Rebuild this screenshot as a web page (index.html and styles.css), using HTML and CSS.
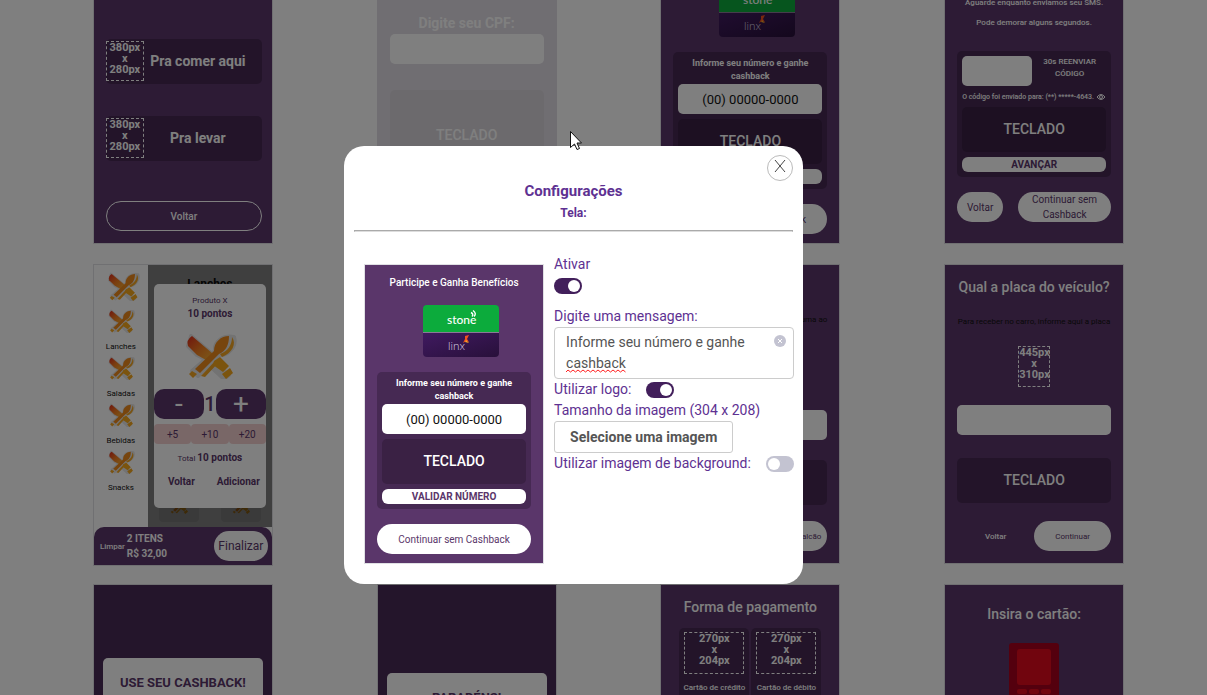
FILE: index.html
```html
<!DOCTYPE html>
<html lang="pt-BR">
<head>
<meta charset="utf-8">
<title>Configurações de telas</title>
<link rel="stylesheet" href="styles.css">
</head>
<body>
<svg class="defs" aria-hidden="true">
  <defs>
    <linearGradient id="knife" x1="0" y1="0" x2="1" y2="1">
      <stop offset="0" stop-color="#e02a1c"/><stop offset=".5" stop-color="#f47c20"/><stop offset="1" stop-color="#f9b233"/>
    </linearGradient>
    <linearGradient id="linxbg" x1="0" y1="0" x2="1" y2="1">
      <stop offset="0" stop-color="#401a60"/><stop offset="1" stop-color="#28103a"/>
    </linearGradient>
    <symbol id="cutlery" viewBox="0 0 54 46">
      <g stroke="#e6e6e6" stroke-width="4" stroke-linejoin="round" fill="#e6e6e6">
        <path d="M8 3 29 21 24 27 14 22 5 13Z"/><path d="M32 18C31 8 41 2 51 4 54 13 45 23 36 22L15 43 9 38Z"/><path d="M30 28 46 42 41 46 27 33Z"/>
      </g>
      <path fill="url(#knife)" d="M9 3 29 20Q29 27 23 27L14 22 5 13Q3 7 9 3Z"/>
      <path fill="#ef8a1c" d="M31 18C31 9 38 3 46 3 46 12 43 18 36 21L17 40 12 36Z"/>
      <path fill="#f5a623" d="M49 4C54 11 49 20 39 24L37 21C45 18 49 12 49 4ZM18 43 33 27 36 29 22 44ZM9 38 14 41 10 45 6 41Z"/>
      <path fill="#f7a81d" d="M31 28 37 24 46 33 40 39 30 32ZM39 41 47 35 50 40 43 46Z"/>
    </symbol>
    <symbol id="brand" viewBox="0 0 76 52">
      <path fill="#0cab3c" d="M0 27V4a4 4 0 0 1 4-4H72a4 4 0 0 1 4 4V27Z"/>
      <path fill="url(#linxbg)" d="M0 28H76V48a4 4 0 0 1-4 4H4a4 4 0 0 1-4-4Z"/>
      <path stroke="#8a7a96" d="M0 27.5H76"/>
      <text class="brand-stone" x="24" y="19">stone</text>
      <path fill="none" stroke="#fff" stroke-width="1.400" d="M48 7.500q3 1.500 1 4M50 5.500q4 3 1 6"/>
      <text class="brand-linx" x="25" y="45">linx</text>
      <path fill="#f4511e" d="M42 31 46 30 44 34 46 37 43 36 40 38 42 34Z"/><path fill="#f9a825" d="M43 35 46 38 42 37Z"/>
    </symbol>
  </defs>
</svg>

<main class="board">
  <section class="card card-where">
    <button class="option"><span class="slot">380px<br>x<br>280px</span><span class="option-name">Pra comer aqui</span></button>
    <button class="option"><span class="slot">380px<br>x<br>280px</span><span class="option-name">Pra levar</span></button>
    <button class="pill-outline">Voltar</button>
  </section>

  <section class="card card-cpf">
    <label class="heading" for="cpf">Digite seu CPF:</label>
    <input class="field" id="cpf" type="text">
    <div class="keyboard keyboard-tall">TECLADO</div>
  </section>

  <section class="card card-phone">
    <h3 class="invite">Participe e Ganha Benefícios</h3>
    <svg class="brand" role="img" aria-label="stone linx"><use href="#brand"/></svg>
    <div class="panel">
      <label class="panel-label" for="phone1">Informe seu número e ganhe cashback</label>
      <input class="field" id="phone1" type="text" value="(00) 00000-0000">
      <div class="keyboard">TECLADO</div>
      <button class="thin-button">VALIDAR NÚMERO</button>
    </div>
    <button class="pill">Continuar sem Cashback</button>
  </section>

  <section class="card card-sms">
    <p class="notice">Aguarde enquanto enviamos seu SMS.</p>
    <p class="notice">Pode demorar alguns segundos.</p>
    <div class="panel">
      <div class="code-row">
        <input class="field" type="text" aria-label="Código">
        <span class="resend">30s REENVIAR CÓDIGO</span>
      </div>
      <p class="sent">O código foi enviado para: (**) *****-4643.
        <svg class="eye" viewBox="0 0 10 8"><path d="M1 4Q5-1 9 4 5 9 1 4Z"/><circle cx="5" cy="4" r="1.500"/></svg></p>
      <div class="keyboard">TECLADO</div>
      <button class="thin-button">AVANÇAR</button>
    </div>
    <div class="actions">
      <button class="pill">Voltar</button>
      <button class="pill pill-wide">Continuar sem Cashback</button>
    </div>
  </section>

  <section class="card card-menu">
    <div class="menu-body">
      <nav class="categories">
        <svg class="cat-main"><use href="#cutlery"/></svg>
        <a href="#lanches"><svg><use href="#cutlery"/></svg>Lanches</a>
        <a href="#saladas"><svg><use href="#cutlery"/></svg>Saladas</a>
        <a href="#bebidas"><svg><use href="#cutlery"/></svg>Bebidas</a>
        <a href="#snacks"><svg><use href="#cutlery"/></svg>Snacks</a>
      </nav>
      <div class="products">
        <h3 class="products-title">Lanches</h3>
        <div class="product-row">
          <div class="product"><svg><use href="#cutlery"/></svg></div>
          <div class="product"><svg><use href="#cutlery"/></svg></div>
        </div>
        <div class="product-shade">
          <div class="product-box">
            <p class="small">Produto X</p>
            <p class="points">10 pontos</p>
            <svg class="product-pic"><use href="#cutlery"/></svg>
            <div class="counter"><button>-</button><span>1</span><button>+</button></div>
            <div class="steps"><button>+5</button><button>+10</button><button>+20</button></div>
            <p class="small total">Total <b>10 pontos</b></p>
            <div class="product-actions"><button>Voltar</button><button>Adicionar</button></div>
          </div>
        </div>
      </div>
    </div>
    <footer class="cart">
      <button class="clear">Limpar</button>
      <p class="cart-sum">2 ITENS<br>R$ 32,00</p>
      <button class="finish">Finalizar</button>
    </footer>
  </section>

  <section class="card"></section>

  <section class="card card-counter">
    <p class="hint">Retire no balcão, informe uma ao</p>
    <input class="field" type="text" aria-label="Nome">
    <div class="keyboard">TECLADO</div>
    <button class="pill">Retirar no balcão</button>
  </section>

  <section class="card card-plate">
    <h3 class="heading">Qual a placa do veículo?</h3>
    <label class="hint" for="plate">Para receber no carro, informe aqui a placa</label>
    <span class="slot">445px<br>x<br>310px</span>
    <input class="field" id="plate" type="text">
    <div class="keyboard">TECLADO</div>
    <div class="actions">
      <button class="ghost">Voltar</button>
      <button class="pill">Continuar</button>
    </div>
  </section>

  <section class="card card-message"><h3 class="message">USE SEU CASHBACK!</h3></section>
  <section class="card card-message card-congrats"><h3 class="message">PARABÉNS!</h3></section>

  <section class="card card-payment">
    <h3 class="heading">Forma de pagamento</h3>
    <div class="methods">
      <button class="method"><span class="slot">270px<br>x<br>204px</span>Cartão de crédito</button>
      <button class="method"><span class="slot">270px<br>x<br>204px</span>Cartão de débito</button>
    </div>
  </section>

  <section class="card card-insert">
    <h3 class="heading">Insira o cartão:</h3>
    <svg class="terminal" viewBox="0 0 50 90">
      <rect width="50" height="90" rx="3" fill="#a9001c"/>
      <rect x="8" y="6" width="34" height="36" rx="3" fill="#e30a1c"/>
      <g fill="#e30a1c"><rect x="8" y="46" width="10" height="5" rx="2"/><rect x="20" y="46" width="10" height="5" rx="2"/><rect x="32" y="46" width="10" height="5" rx="2"/></g>
    </svg>
  </section>
</main>

<div class="overlay">
  <div class="modal" role="dialog" aria-labelledby="modal-title">
    <button class="close" aria-label="Fechar"><svg viewBox="0 0 12 12"><path d="M1 0 11 12M11 0 1 12"/></svg></button>
    <h1 class="modal-title" id="modal-title">Configurações</h1>
    <h2 class="modal-subtitle">Tela:</h2>
    <hr class="rule">
    <div class="modal-body">
      <section class="card card-phone">
        <h3 class="invite">Participe e Ganha Benefícios</h3>
        <svg class="brand" role="img" aria-label="stone linx"><use href="#brand"/></svg>
        <div class="panel">
          <label class="panel-label" for="phone2">Informe seu número e ganhe cashback</label>
          <input class="field" id="phone2" type="text" value="(00) 00000-0000">
          <div class="keyboard">TECLADO</div>
          <button class="thin-button">VALIDAR NÚMERO</button>
        </div>
        <button class="pill">Continuar sem Cashback</button>
      </section>
      <form class="settings">
        <label for="active">Ativar</label>
        <input class="switch switch-active" id="active" type="checkbox" checked>
        <label for="message">Digite uma mensagem:</label>
        <div class="message-box">
          <textarea id="message" rows="2" spellcheck="false">Informe seu número e ganhe cashback</textarea>
          <svg class="squiggle" viewBox="0 0 60 4"><path d="M0 3l2-2 2.500 2 2.500-2 2.500 2 2.500-2 2.500 2 2.500-2 2.500 2 2.500-2 2.500 2 2.500-2 2.500 2 2.500-2 2.500 2 2.500-2 2.500 2 2.500-2 2.500 2 2.500-2 2.500 2 2.500-2 2.500 2 2.500-2 2.500 2"/></svg>
          <button class="clear-text" type="button" aria-label="Limpar texto"><svg viewBox="0 0 12 12"><circle cx="6" cy="6" r="6"/><path d="M4 4 8 8M8 4 4 8"/></svg></button>
        </div>
        <div class="setting"><label for="logo">Utilizar logo:</label><input class="switch" id="logo" type="checkbox" checked></div>
        <label for="pick">Tamanho da imagem (304 x 208)</label>
        <button class="pick" id="pick" type="button">Selecione uma imagem</button>
        <div class="setting"><label for="bg">Utilizar imagem de background:</label><input class="switch" id="bg" type="checkbox"></div>
      </form>
    </div>
  </div>
</div>

<svg class="cursor" viewBox="0 0 12 20" aria-hidden="true"><path d="M.5.5V16.500L4.500 13 7 18.500 9.500 17.500 7 12H11.500Z"/></svg>
</body>
</html>
```
FILE: styles.css
```css
* { box-sizing: border-box; }
body { margin: 0; font-family: Roboto, "Liberation Sans", sans-serif; background: #fff; overflow: hidden; }
h1, h2, h3, p { margin: 0; }
button, input, textarea { font-family: inherit; margin: 0; padding: 0; border: 0; }
.defs { position: absolute; width: 0; height: 0; }

/* Grid of screen previews, scrolled part of a row down */
.board {
  display: grid;
  grid-template-columns: repeat(4, 1fr);
  grid-auto-rows: 300px;
  gap: 20px 0;
  justify-items: center;
  height: calc(100vh + 56px);
  margin-top: -56px;
  padding: 0 31px 0 41px;
  overflow: hidden;
}
.card {
  display: flex;
  flex-direction: column;
  width: 180px;
  height: 300px;
  padding: 12px;
  border: 1px solid #e0e0e4;
  background: #5a366a;
  color: #fff;
  text-align: center;
}
.heading { font-size: 14px; line-height: 20px; font-weight: 500; }
.slot {
  display: block;
  width: 38px;
  height: 40px;
  border: 1px dashed #fff;
  font-size: 11px;
  line-height: 11px;
  font-weight: 700;
}
.field {
  width: 100%;
  height: 30px;
  flex: none;
  border-radius: 5px;
  background: #fff;
  color: #111;
  font-size: 13px;
  text-align: center;
}
.keyboard {
  display: flex;
  flex: none;
  align-items: center;
  justify-content: center;
  height: 45px;
  padding-bottom: 1px;
  border-radius: 5px;
  background: #462953;
  font-size: 14px;
  font-weight: 500;
}
.pill {
  flex: none;
  height: 30px;
  border-radius: 15px;
  background: #fff;
  color: #5a366a;
  font-size: 10px;
}
.panel {
  display: flex;
  flex-direction: column;
  gap: 5px;
  padding: 5px;
  border-radius: 5px;
  background: #462953;
}
.panel .keyboard { background: #3a2144; }
.thin-button {
  height: 15px;
  border-radius: 6px;
  background: #fff;
  color: #5a366a;
  font-size: 10px;
  line-height: 15px;
  font-weight: 700;
}
.actions { display: flex; justify-content: space-between; }

.card-where { justify-content: flex-end; padding-right: 10px; }
.option {
  display: flex;
  align-items: center;
  height: 45px;
  margin-bottom: 32px;
  padding: 0 10px 2px 0;
  border-radius: 5px;
  background: #462953;
  color: #fff;
}
.option-name { flex: 1; font-size: 14px; font-weight: 700; }
.pill-outline {
  height: 30px;
  margin-top: 8px;
  border: 1px solid #fff;
  border-radius: 15px;
  background: none;
  color: #fff;
  font-size: 10px;
  font-weight: 500;
}

.card-cpf { padding-top: 68px; background: #e0dce4; border-color: #e0dce4; }
.card-cpf .heading { margin-bottom: 1px; font-weight: 700; }
.keyboard-tall { height: 90px; margin-top: 26px; background: #d9d5db; }

.card-phone { padding-top: 10px; }
.invite { font-size: 10px; line-height: 16px; font-weight: 500; }
.brand { flex: none; align-self: center; width: 76px; height: 52px; margin: 14px 0 15px 14px; }
.brand-stone { fill: #fff; font: 500 12px Lato, sans-serif; }
.brand-linx { fill: #d8cfe0; font: 300 11px "Open Sans", sans-serif; }
.panel-label { margin-bottom: -4px; font-size: 9px; line-height: 13px; font-weight: 700; }
.card-phone .pill { margin-top: 15px; }

.card-sms { padding-top: 48px; }
.notice { height: 20px; font-size: 8px; line-height: 20px; font-weight: 500; }
.card-sms .panel { margin-top: 18px; }
.code-row { display: flex; gap: 5px; }
.code-row .field { width: 70px; }
.resend { flex: 1; padding: 0 8px 0 4px; font-size: 8px; line-height: 12px; font-weight: 500; }
.sent {
  display: flex;
  align-items: center;
  justify-content: space-between;
  height: 11px;
  font-size: 7px;
  white-space: nowrap;
  font-weight: 500;
}
.eye { width: 10px; height: 8px; fill: none; stroke: #fff; }
.card-sms .actions { margin-top: 15px; }
.card-sms .pill { width: 46px; }
.card-sms .pill-wide { width: 93px; line-height: 15px; }

.card-menu { height: 302px; padding: 0; background: #fff; color: #111; }
.menu-body { display: flex; height: 262px; }
.categories { display: flex; flex: none; flex-direction: column; align-items: center; width: 54px; padding-top: 7px; }
.categories a { display: flex; flex-direction: column; align-items: center; height: 47px; color: #111; font-size: 8px; line-height: 12px; text-decoration: none; }
.categories a svg { width: 28px; height: 24px; margin-bottom: 8px; }
.categories .cat-main { width: 34px; height: 29px; margin: 0 0 8px 4px; }
.products { display: flex; flex: 1; flex-direction: column; position: relative; justify-content: space-between; }
.products-title { padding-top: 12px; font-size: 12px; line-height: 14px; }
.product-row { display: flex; justify-content: space-around; padding-bottom: 5px; }
.product { width: 40px; height: 40px; padding-top: 14px; border-radius: 4px; background: #e9e9e9; }
.product svg { width: 22px; height: 18px; }
.product-shade { position: absolute; inset: 0; padding: 19px 6px; background: rgba(0, 0, 0, .5); }
.product-box { height: 224px; padding-top: 10px; border-radius: 5px; background: #fff; color: #5a366a; }
.small { font-size: 8px; line-height: 13px; }
.points { font-size: 10px; line-height: 14px; font-weight: 700; }
.product-pic { display: block; width: 54px; height: 46px; margin: 12px auto 10px; }
.counter, .steps { display: flex; align-items: center; justify-content: space-between; }
.counter { font-size: 20px; font-weight: 500; }
.counter button { width: 50px; height: 30px; border-radius: 10px; background: #5a366a; color: #fff; font-size: 28px; line-height: 30px; }
.steps { margin-top: 5px; }
.steps button { flex: 1; height: 20px; border-radius: 4px; background: #f3cfcf; color: #5a366a; font-size: 10px; }
.total { margin-top: 7px; }
.total b { font-size: 10px; }
.product-actions { display: flex; justify-content: space-between; padding: 11px 6px 0 14px; }
.product-actions button { background: none; color: #5a366a; font-size: 10px; font-weight: 700; }
.cart { display: flex; align-items: center; height: 38px; padding: 0 4px 0 6px; border-radius: 10px 10px 0 0; background: #5a366a; color: #fff; }
.clear { background: none; color: #fff; font-size: 8px; font-weight: 500; }
.cart-sum { flex: 1; font-size: 10px; line-height: 15px; font-weight: 700; text-align: left; padding-left: 2px; }
.finish { width: 54px; height: 30px; border-radius: 15px; background: #fff; color: #5a366a; font-size: 12px; }

.hint { color: #111; font-size: 8px; line-height: 12px; white-space: nowrap; }
.card-counter { padding-top: 49px; }
.card-counter .hint { display: flex; justify-content: flex-end; margin-bottom: 84px; }
.card-counter .keyboard { margin: 20px 0 16px; }
.card-counter .pill { padding-right: 6px; font-size: 8px; text-align: right; }

.card-plate .hint { display: flex; justify-content: center; margin: 19px 0 18px; }
.card-plate .slot { align-self: center; width: 32px; height: 41px; margin-bottom: 18px; }
.card-plate .keyboard { margin: 23px 0 18px; }
.card-plate .actions button { width: 77px; font-size: 8px; }
.ghost { background: none; color: #fff; font-weight: 500; }

.card-message { padding: 73px 9px 0; background: #482a56; }
.card-congrats { padding-top: 88px; }
.message { height: 200px; padding-top: 17px; border-radius: 5px; background: #fff; color: #5a366a; font-size: 13px; line-height: 15px; font-weight: 700; }

.methods { display: flex; gap: 2px; margin: 11px 6px 0; }
.method {
  display: flex;
  flex: 1;
  flex-direction: column;
  align-items: center;
  gap: 9px;
  padding-top: 4px;
  height: 90px;
  border-radius: 5px;
  background: #462953;
  color: #fff;
  font-size: 8px;
  font-weight: 500;
  white-space: nowrap;
}
.method .slot { width: 60px; height: 42px; }
.card-insert { padding-top: 19px; }
.terminal { align-self: center; width: 50px; height: 90px; margin-top: 19px; }

/* Dialog */
.overlay {
  position: fixed;
  inset: 0;
  display: flex;
  align-items: center;
  justify-content: center;
  padding: 35px 60px 0 0;
  background: rgba(0, 0, 0, .5);
}
.modal {
  position: relative;
  width: 40%;
  min-width: 458px;
  padding: 34px 10px 20px;
  border-radius: 20px;
  background: #fff;
  color: #5e3192;
  text-align: center;
}
.close {
  position: absolute;
  top: 9px;
  right: 10px;
  width: 26px;
  height: 26px;
  border: 1px solid #bbb;
  border-radius: 13px;
  background: #fff;
}
.close svg { display: block; width: 12px; height: 12px; margin: 4px auto 8px; stroke: #444; overflow: visible; }
.modal-title { font-size: 15px; line-height: 22px; font-weight: 700; }
.modal-subtitle { font-size: 12px; line-height: 22px; font-weight: 700; }
.rule { height: 2px; margin: 6px 0 33px; border: 1px solid #aaa; border-bottom-color: #ddd; }
.modal-body { display: flex; gap: 10px; padding-left: 10px; margin-top: -1px; }
.modal-body .card { flex: none; }
.settings {
  display: flex;
  flex: 1;
  flex-direction: column;
  align-items: flex-start;
  margin-top: -10px;
  font-size: 14px;
  line-height: 21px;
  text-align: left;
}
.setting { display: flex; align-items: center; gap: 15px; white-space: nowrap; }
.switch {
  appearance: none;
  display: flex;
  flex: none;
  width: 28px;
  height: 16px;
  padding: 2px;
  border-radius: 8px;
  background: #c3c3d1;
}
.switch::before { content: ""; width: 12px; height: 12px; border-radius: 6px; background: #fff; }
.switch:checked { justify-content: flex-end; background: #421f5b; }
.switch-active { margin: 3px 0 12px; }
.message-box { position: relative; width: 100%; height: 52px; }
.message-box textarea {
  display: block;
  width: 100%;
  height: 52px;
  padding: 4px 40px 4px 11px;
  border: 1px solid #ccc;
  border-radius: 4px;
  resize: none;
  overflow: hidden;
  color: #555;
  font-size: 14px;
  line-height: 21px;
}
.squiggle { position: absolute; left: 12px; top: 42px; width: 60px; height: 4px; fill: none; stroke: #f22; }
.clear-text { position: absolute; right: 8px; top: 8px; width: 12px; height: 12px; background: none; }
.clear-text svg { display: block; fill: #c3c3d1; stroke: none; }
.clear-text path { stroke: #fff; }
.pick {
  height: 32px;
  padding: 0 15px;
  border: 1px solid #ccc;
  border-radius: 3px;
  background: #fff;
  color: #555;
  font-size: 14px;
  font-weight: 700;
}
.cursor { position: fixed; left: 570px; top: 131px; width: 12px; height: 20px; fill: #fff; stroke: #111; }
```
